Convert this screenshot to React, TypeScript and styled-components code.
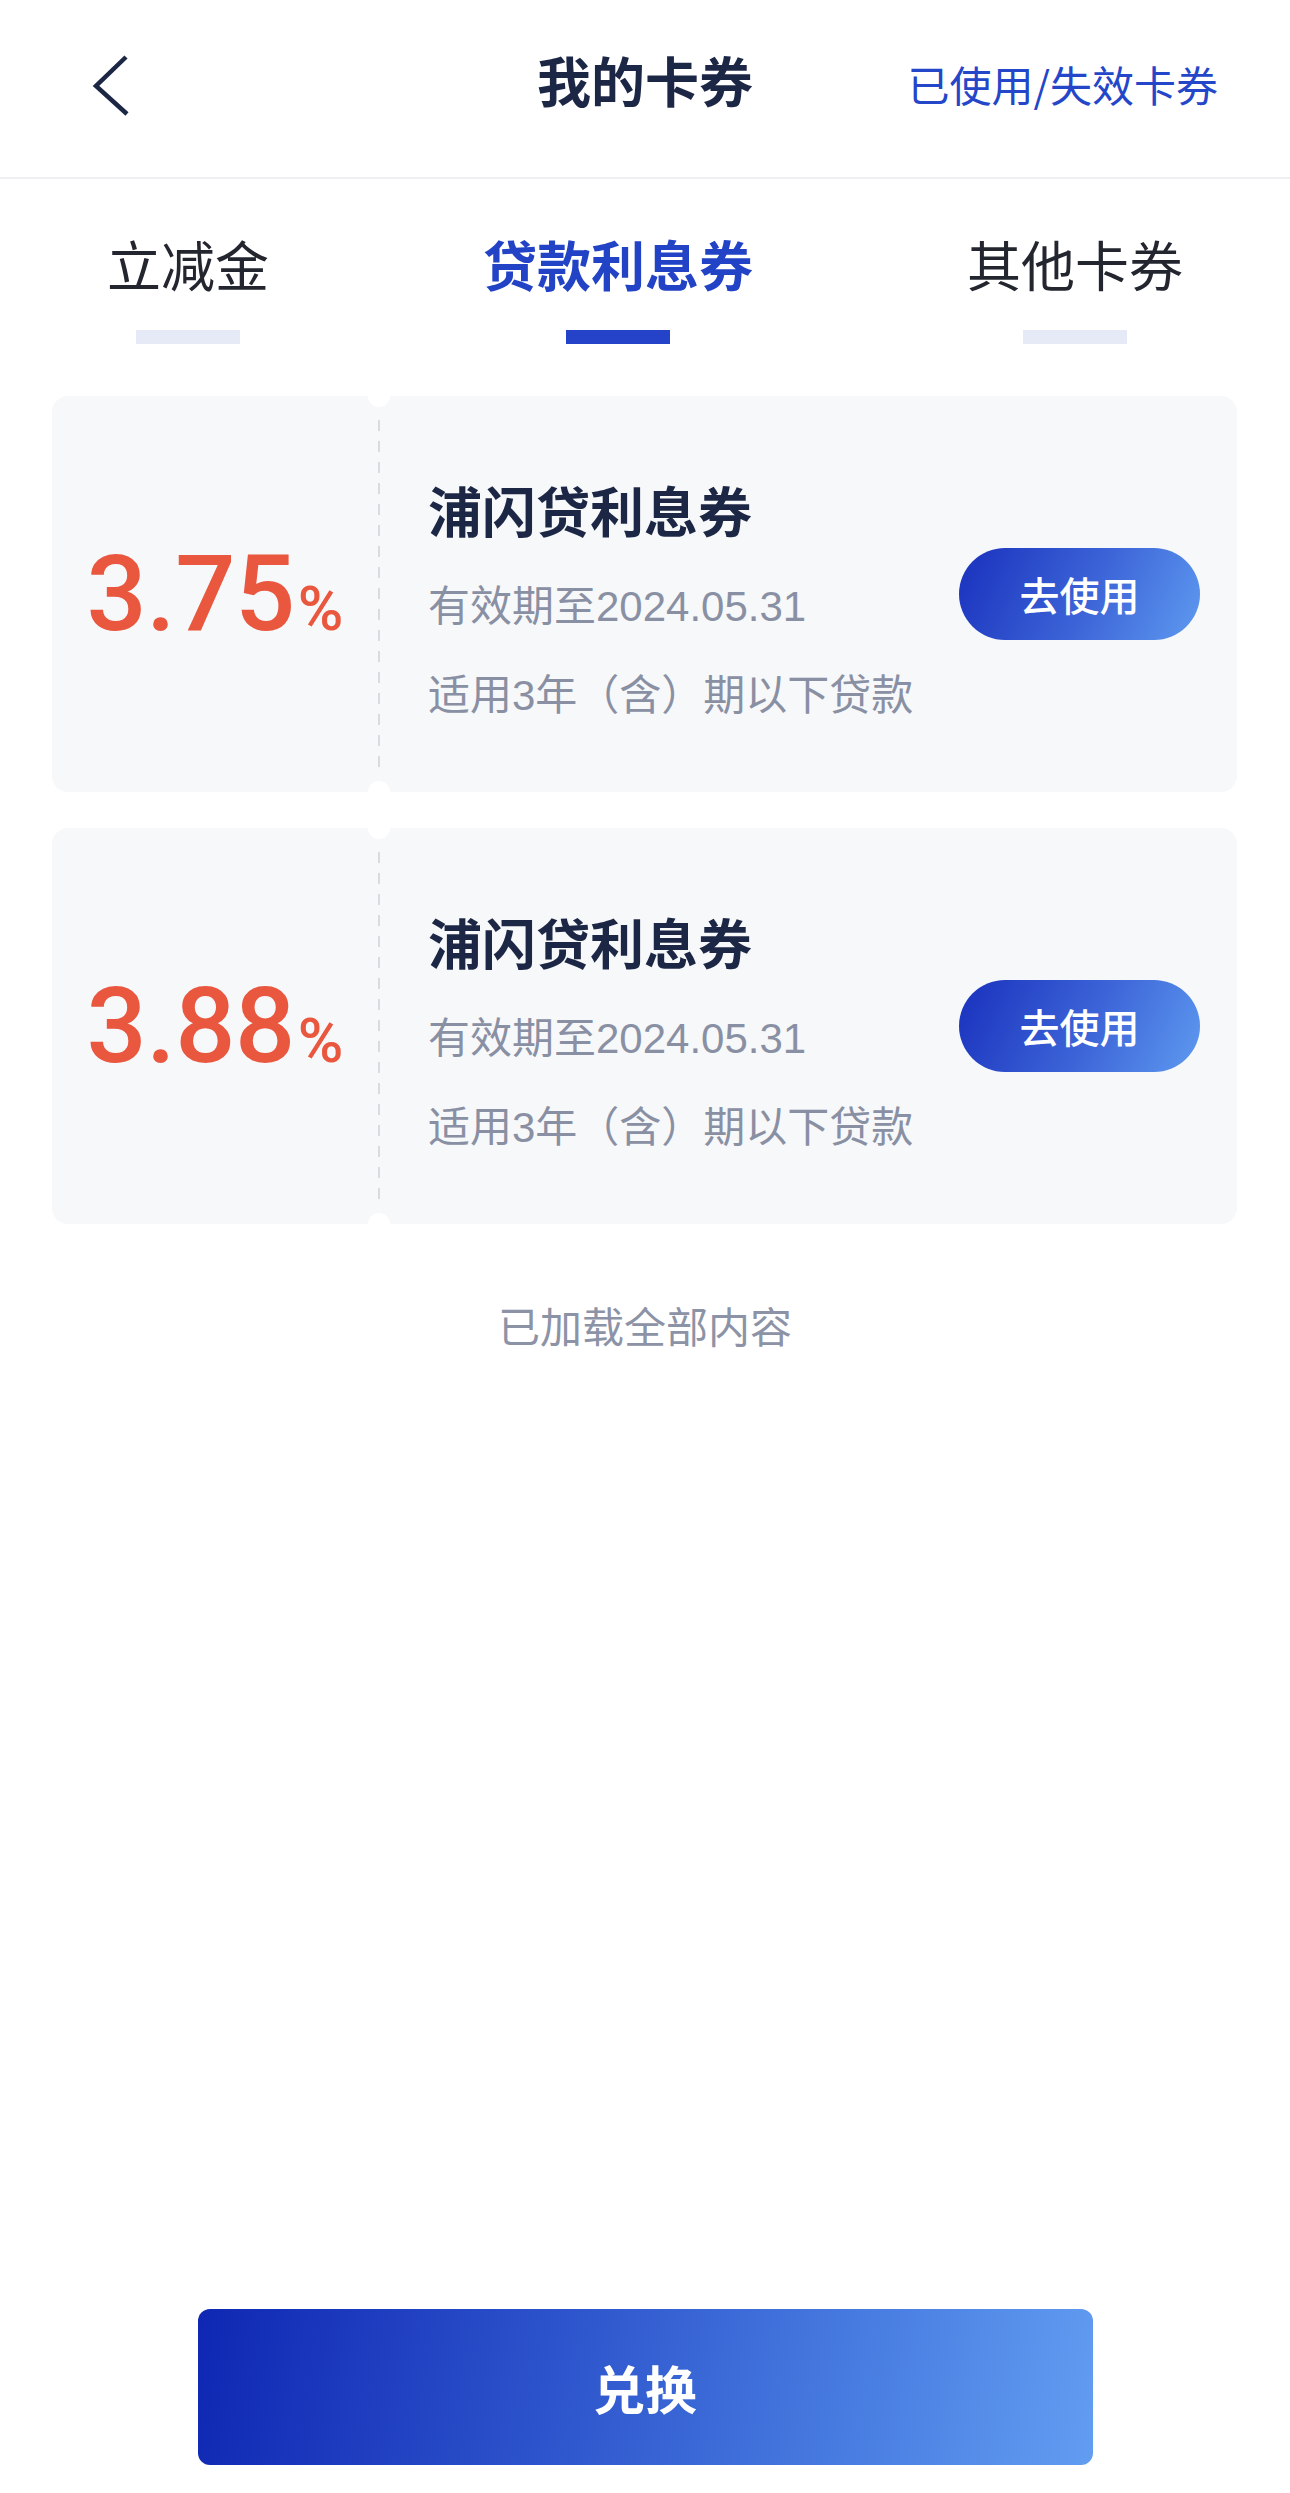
import styled, { createGlobalStyle } from 'styled-components'

const GlobalStyle = createGlobalStyle`
  html, body {
    margin: 0;
    padding: 0;
    background: #ffffff;
  }

  body {
    font-family: 'Liberation Sans', 'Noto Sans CJK SC', sans-serif;
    -webkit-font-smoothing: antialiased;
  }

  * {
    box-sizing: border-box;
  }
`

const Page = styled.div`
  width: 1290px;
  min-height: 2493px;
  display: flex;
  flex-direction: column;
  background: #ffffff;
`

const Header = styled.header`
  height: 179px;
  display: grid;
  grid-template-columns: 1fr auto 1fr;
  align-items: center;
  padding-bottom: 8px;
  border-bottom: 2px solid #efeff1;
`

const BackButton = styled.div`
  padding-left: 90px;
  display: flex;
  align-items: center;
`

const Title = styled.h1`
  margin: 0;
  font-size: 54px;
  font-weight: 700;
  color: #1c2645;
  line-height: 1.3;
`

const HistoryLink = styled.a`
  justify-self: end;
  padding-right: 72px;
  font-family: 'Noto Sans CJK SC', sans-serif;
  font-size: 42px;
  color: #2446c8;
  text-decoration: none;
  line-height: 1.3;
`

const Tabs = styled.nav`
  display: flex;
  justify-content: space-between;
  padding: 51px 107px 0;
`

const Tab = styled.div`
  display: flex;
  flex-direction: column;
  align-items: center;
`

const TabLabel = styled.span<{ $active?: boolean }>`
  font-size: 54px;
  line-height: 76px;
  font-weight: ${(p) => (p.$active ? 700 : 400)};
  color: ${(p) => (p.$active ? '#2343c6' : '#23262f')};
`

const TabBar = styled.span<{ $active?: boolean }>`
  margin-top: 24px;
  width: 104px;
  height: 14px;
  background: ${(p) => (p.$active ? '#2443c8' : '#e5eaf6')};
`

const CouponList = styled.section`
  display: flex;
  flex-direction: column;
  gap: 36px;
  padding: 52px 53px 0 52px;
`

const Coupon = styled.div`
  height: 396px;
  display: flex;
  background: #f7f8fa;
  border-radius: 16px;
`

const RateBox = styled.div`
  width: 326px;
  display: flex;
  align-items: center;
  justify-content: center;
`

const Rate = styled.div`
  color: #e9573f;
  font-family: Roboto, 'Liberation Sans', sans-serif;
  font-weight: 500;
  white-space: nowrap;
  line-height: 1;
`

const RateValue = styled.span`
  font-size: 106px;
  letter-spacing: -0.5px;
`

const RateUnit = styled.span`
  font-size: 62px;
  margin-left: 3px;
`

const Divider = styled.div`
  position: relative;
  width: 2px;
  margin: 24px 0;
  background: repeating-linear-gradient(
    to bottom,
    #d9dbe0 0,
    #d9dbe0 11px,
    transparent 11px,
    transparent 21px
  );

  &::before,
  &::after {
    content: '';
    position: absolute;
    left: 50%;
    width: 22px;
    height: 22px;
    margin-left: -11px;
    border-radius: 50%;
    background: #ffffff;
  }

  &::before {
    top: -35px;
  }

  &::after {
    bottom: -35px;
  }
`

const CouponBody = styled.div`
  flex: 1;
  display: flex;
  align-items: center;
  padding: 0 37px 0 48px;
`

const CouponInfo = styled.div`
  flex: 1;
  display: flex;
  flex-direction: column;
  padding-top: 12px;
`

const CouponName = styled.div`
  font-family: 'Noto Sans CJK SC', sans-serif;
  font-size: 54px;
  line-height: 66px;
  font-weight: 700;
  color: #1c2645;
`

const CouponMeta = styled.div<{ $gap: number }>`
  margin-top: ${(p) => p.$gap}px;
  font-size: 42px;
  line-height: 56px;
  color: #8a90a3;
`

const UseButton = styled.button`
  width: 241px;
  height: 92px;
  border: none;
  border-radius: 46px;
  background: linear-gradient(115deg, #1931bd 0%, #3d65d8 55%, #5e9af0 100%);
  color: #ffffff;
  font-family: 'Noto Sans CJK SC', sans-serif;
  font-size: 40px;
  font-weight: 500;
  padding: 0;
`

const EndNote = styled.div`
  margin-top: 77px;
  text-align: center;
  font-size: 42px;
  line-height: 56px;
  color: #8d93a6;
`

const Footer = styled.footer`
  margin-top: auto;
  display: flex;
  justify-content: center;
  padding-bottom: 28px;
`

const ExchangeButton = styled.button`
  width: 895px;
  height: 156px;
  border: none;
  border-radius: 12px;
  background: linear-gradient(100deg, #0f27b3 0%, #2d54cc 40%, #4a7fe2 75%, #619df1 100%);
  color: #ffffff;
  font-family: 'Noto Sans CJK SC', sans-serif;
  font-size: 52px;
  font-weight: 700;
`

interface CouponData {
  rate: string
  name: string
  expire: string
  rule: string
}

const coupons: CouponData[] = [
  { rate: '3.75', name: '浦闪贷利息券', expire: '有效期至2024.05.31', rule: '适用3年（含）期以下贷款' },
  { rate: '3.88', name: '浦闪贷利息券', expire: '有效期至2024.05.31', rule: '适用3年（含）期以下贷款' },
]

const tabs = ['立减金', '贷款利息券', '其他卡券']

const BackIcon = () => (
  <svg width="42" height="66" viewBox="0 0 42 66" fill="none">
    <polyline points="36,5 6,34 37,62" stroke="#1c2645" strokeWidth="4.5" />
  </svg>
)

const CouponCard = ({ coupon }: { coupon: CouponData }) => (
  <Coupon>
    <RateBox>
      <Rate>
        <RateValue>{coupon.rate}</RateValue>
        <RateUnit>%</RateUnit>
      </Rate>
    </RateBox>
    <Divider />
    <CouponBody>
      <CouponInfo>
        <CouponName>{coupon.name}</CouponName>
        <CouponMeta $gap={36}>{coupon.expire}</CouponMeta>
        <CouponMeta $gap={33}>{coupon.rule}</CouponMeta>
      </CouponInfo>
      <UseButton>去使用</UseButton>
    </CouponBody>
  </Coupon>
)

const App = () => {
  const activeTab = 1

  return (
    <Page>
      <GlobalStyle />
      <Header>
        <BackButton>
          <BackIcon />
        </BackButton>
        <Title>我的卡券</Title>
        <HistoryLink>已使用/失效卡券</HistoryLink>
      </Header>
      <Tabs>
        {tabs.map((t, i) => (
          <Tab key={t}>
            <TabLabel $active={i === activeTab}>{t}</TabLabel>
            <TabBar $active={i === activeTab} />
          </Tab>
        ))}
      </Tabs>
      <CouponList>
        {coupons.map((c) => (
          <CouponCard key={c.rate} coupon={c} />
        ))}
      </CouponList>
      <EndNote>已加载全部内容</EndNote>
      <Footer>
        <ExchangeButton>兑换</ExchangeButton>
      </Footer>
    </Page>
  )
}

export default App
